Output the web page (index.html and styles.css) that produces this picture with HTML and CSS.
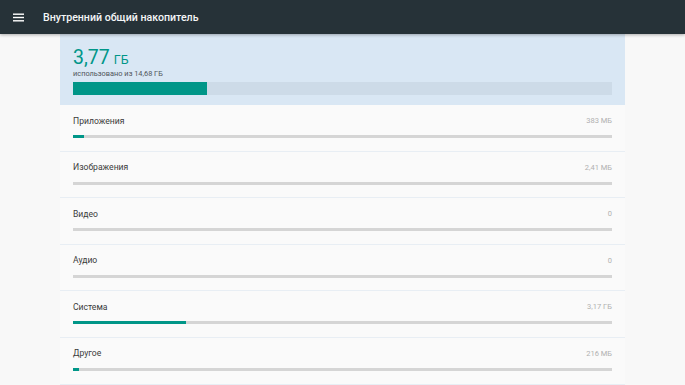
FILE: index.html
```html
<!DOCTYPE html>
<html lang="ru">
<head>
<meta charset="utf-8">
<title>Внутренний общий накопитель</title>
<link rel="stylesheet" href="styles.css">
</head>
<body>
<header class="toolbar">
  <svg class="menu" width="11" height="9" viewBox="0 0 11 9"><rect x="0" y="0.5" width="11" height="1.4" fill="#fff"/><rect x="0" y="3.8" width="11" height="1.4" fill="#fff"/><rect x="0" y="7.1" width="11" height="1.4" fill="#fff"/></svg>
  <h1 class="title">Внутренний общий накопитель</h1>
</header>
<main class="card">
  <section class="summary">
    <div class="total"><span class="num">3,77</span> <span class="unit">ГБ</span></div>
    <div class="used">использовано из 14,68 ГБ</div>
    <div class="bigbar"><div class="bigfill" style="width:24.9%"></div></div>
  </section>
  <div class="row">
    <div class="line"><span class="name">Приложения</span><span class="val">383 МБ</span></div>
    <div class="bar"><div class="fill" style="width:2.1%"></div></div>
  </div>
  <div class="row">
    <div class="line"><span class="name">Изображения</span><span class="val">2,41 МБ</span></div>
    <div class="bar"><div class="fill" style="width:0"></div></div>
  </div>
  <div class="row">
    <div class="line"><span class="name">Видео</span><span class="val">0</span></div>
    <div class="bar"><div class="fill" style="width:0"></div></div>
  </div>
  <div class="row">
    <div class="line"><span class="name">Аудио</span><span class="val">0</span></div>
    <div class="bar"><div class="fill" style="width:0"></div></div>
  </div>
  <div class="row">
    <div class="line"><span class="name">Система</span><span class="val">3,17 ГБ</span></div>
    <div class="bar"><div class="fill" style="width:21%"></div></div>
  </div>
  <div class="row">
    <div class="line"><span class="name">Другое</span><span class="val">216 МБ</span></div>
    <div class="bar"><div class="fill" style="width:1.1%"></div></div>
  </div>
</main>
</body>
</html>
```
FILE: styles.css
```css
html, body {
  margin: 0;
  padding: 0;
  background: #f8f8f8;
  font-family: Roboto, "Noto Sans", sans-serif;
  height: 385px;
  overflow: hidden;
}
.toolbar {
  height: 34px;
  background: #263238;
  display: flex;
  align-items: center;
  padding-left: 13px;
  box-shadow: 0 1px 3px rgba(0,0,0,0.3);
  position: relative;
  z-index: 1;
}
.menu {
  display: block;
}
.title {
  margin: 0 0 0 19px;
  font-size: 10.6px;
  font-weight: 500;
  color: #f4f6f7;
}
.card {
  width: 565px;
  margin: 0 auto;
  background: #fafafa;
}
.summary {
  background: #d9e7f4;
  padding: 12px 13px 10px;
  height: 71px;
  box-sizing: border-box;
}
.total {
  color: #009688;
  height: 23px;
  line-height: 23px;
}
.num {
  font-size: 19.5px;
}
.unit {
  font-size: 12.5px;
}
.used {
  font-size: 7.4px;
  color: #50555b;
  line-height: 9px;
  margin-bottom: 4px;
}
.bigbar {
  height: 13px;
  background: #cddbe8;
}
.bigfill {
  height: 100%;
  background: #009688;
}
.row {
  height: 46.6px;
  box-sizing: border-box;
  padding: 10px 13px 0;
  border-bottom: 1px solid #e8eef4;
}
.line {
  display: flex;
  justify-content: space-between;
  align-items: center;
  height: 11px;
  margin-bottom: 9px;
}
.name {
  font-size: 8.6px;
  color: #3a3a3a;
}
.val {
  font-size: 7.5px;
  color: #b0b0b0;
}
.bar {
  height: 3px;
  background: #d5d5d5;
}
.fill {
  height: 100%;
  background: #009688;
}
```
